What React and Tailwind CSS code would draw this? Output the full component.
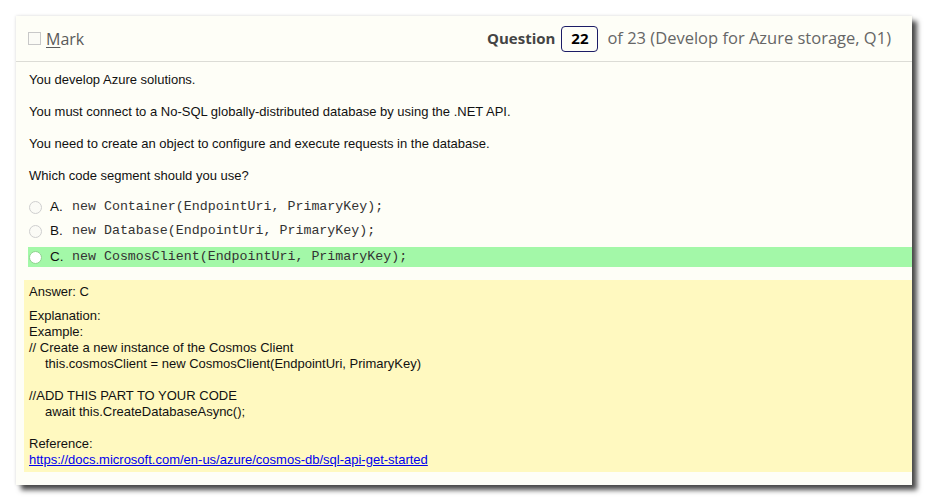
import React from 'react';

const options = [
  { letter: 'A', code: 'new Container(EndpointUri, PrimaryKey);' },
  { letter: 'B', code: 'new Database(EndpointUri, PrimaryKey);' },
  { letter: 'C', code: 'new CosmosClient(EndpointUri, PrimaryKey);', correct: true },
];

const stem = [
  'You develop Azure solutions.',
  'You must connect to a No-SQL globally-distributed database by using the .NET API.',
  'You need to create an object to configure and execute requests in the database.',
  'Which code segment should you use?',
];

function Radio({ filled }) {
  return (
    <span
      className={`w-[13px] h-[13px] rounded-full border shrink-0 ${
        filled ? 'bg-white border-[#8fd38f]' : 'bg-[#fbfbf6] border-[#cfcfcf]'
      }`}
    />
  );
}

export default function App() {
  return (
    <div className="w-[929px] h-[502px] bg-white pt-[16px] pl-[16px]">
      <div className="w-[896px] h-[469px] bg-[#fefef7] flex flex-col shadow-[0_0_3px_rgba(0,0,0,0.15),5px_5px_5px_rgba(0,0,0,0.7)]">
        {/* Header */}
        <div className="h-[46px] border-b border-[#dcdcd6] flex items-center justify-between pl-[12px] pr-[21px] font-['Open_Sans',sans-serif] text-[16px]">
          <div className="flex items-center gap-[5px]">
            <span className="w-[13px] h-[13px] border border-[#c8c8c8] bg-[#fbfbf6]" />
            <span className="text-[#5a5a5a]">
              <span className="underline underline-offset-2">M</span>ark
            </span>
          </div>
          <div className="flex items-center text-[#666]">
            <span className="font-bold text-[15px] text-[#444]">Question</span>
            <span className="ml-[6px] w-[37px] h-[26px] border border-[#1c1c66] rounded-[4px] flex items-center justify-center font-bold text-[15px] text-black">
              22
            </span>
            <span className="ml-[9px] text-[16.5px]">of 23 (Develop for Azure storage, Q1)</span>
          </div>
        </div>

        {/* Body */}
        <div className="flex-1 flex flex-col pt-[2px] font-['Liberation_Sans',Arial,sans-serif] text-[13px] text-[#111]">
          {stem.map((line) => (
            <div key={line} className="h-[32px] flex items-center pl-[13px]">
              {line}
            </div>
          ))}

          <div className="mt-[3px] flex flex-col">
            {options.map((o) =>
              o.correct ? (
                <div key={o.letter} className="mt-[4px] ml-[12px] h-[20px] flex items-center pl-[1px] bg-[#a3f8a8]">
                  <Radio filled />
                  <span className="ml-[8px] text-[13.5px] w-[22px]">{o.letter}.</span>
                  <span className="font-['Liberation_Mono','Courier_New',monospace] text-[13.3px] text-[#333]">{o.code}</span>
                </div>
              ) : (
                <div key={o.letter} className="h-[24px] flex items-center pl-[13px]">
                  <Radio />
                  <span className="ml-[8px] text-[13.5px] w-[22px]">{o.letter}.</span>
                  <span className="font-['Liberation_Mono','Courier_New',monospace] text-[13.3px] text-[#333]">{o.code}</span>
                </div>
              )
            )}
          </div>

          {/* Answer */}
          <div className="mt-[13px] ml-[8px] h-[192px] bg-[#fff9c0] pt-[4px] pl-[5px] leading-[16px]">
            <div>Answer: C</div>
            <div className="mt-[8px]">Explanation:</div>
            <div>Example:</div>
            <div>// Create a new instance of the Cosmos Client</div>
            <div className="pl-[16px]">this.cosmosClient = new CosmosClient(EndpointUri, PrimaryKey)</div>
            <div className="h-[16px]" />
            <div>//ADD THIS PART TO YOUR CODE</div>
            <div className="pl-[16px]">await this.CreateDatabaseAsync();</div>
            <div className="h-[16px]" />
            <div>Reference:</div>
            <a href="#" className="text-[#0000ee] underline">
              https://docs.microsoft.com/en-us/azure/cosmos-db/sql-api-get-started
            </a>
          </div>
        </div>
      </div>
    </div>
  );
}
